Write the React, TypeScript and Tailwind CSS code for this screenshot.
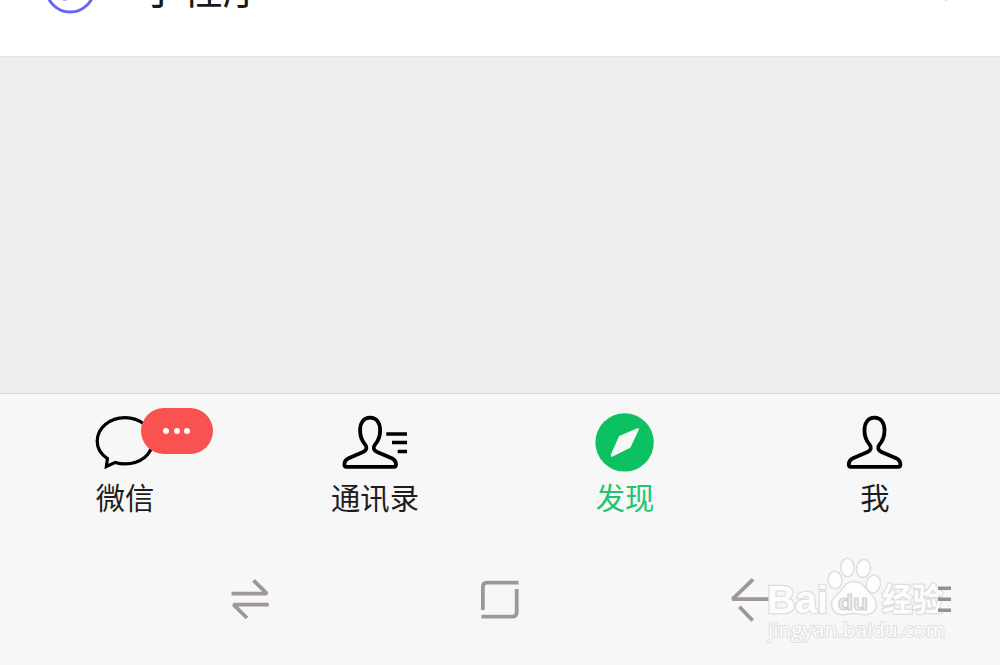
import React from 'react';

const PERSON =
  'M874.5 417.700C867.5 417.700 864.500 423.5 864.500 430.5C864.500 437 866 440.5 869.5 444.5C872 447.5 871 450.5 867.5 452L853 458.3C849.5 460 848.800 461.5 848.800 464.5Q848.800 466.8 851 466.8H898.2Q900.400 466.8 900.400 464.5C900.400 461.5 899.7 460 896.2 458.3L881.5 452C878 450.5 877 447.5 879.5 444.5C883 440.5 884.5 437 884.5 430.5C884.5 423.5 881.5 417.700 874.5 417.700Z';

const ChatIcon = () => (
  <svg width="70" height="64" viewBox="90 410 70 64" fill="none" stroke="#000" strokeWidth="3.2">
    <path d="M125 417.7C109.500 417.700 97.200 428.200 97.200 441.300C97.200 448.200 101.300 454.500 107.400 458.600L106.400 466.500L115.300 462.400Q120 463.900 125 463.900C140.400 463.900 152.500 454.400 152.500 441.300C152.500 428.200 140.400 417.700 125 417.700Z" />
  </svg>
);

const ContactsIcon = () => (
  <svg width="70" height="64" viewBox="340 410 70 64" fill="none" stroke="#000" strokeWidth="3.8">
    <path d={PERSON} transform="translate(-504.400 0)" />
    <path d="M386.300 433.900H407M392 442.600H407M397.700 451.400H407" strokeWidth="3.5" />
  </svg>
);

const DiscoverIcon = () => (
  <svg width="70" height="64" viewBox="590 410 70 64">
    <circle cx="624.600" cy="442.400" r="29.200" fill="#0bc161" />
    <path
      d="M619.100 436L637.300 428.300Q639.400 427.800 638.700 430L630.300 447.800L612.200 456.700Q610.300 457 610.800 454.700Z"
      fill="#f7f7f7"
    />
  </svg>
);

const MeIcon = () => (
  <svg width="70" height="64" viewBox="840 410 70 64" fill="none" stroke="#000" strokeWidth="3.8">
    <path d={PERSON} />
  </svg>
);

const tabs = [
  { label: '微信', icon: <ChatIcon />, badge: true },
  { label: '通讯录', icon: <ContactsIcon /> },
  { label: '发现', icon: <DiscoverIcon />, active: true },
  { label: '我', icon: <MeIcon /> },
];

const Watermark = () => (
  <svg
    className="absolute left-[760px] top-[550px]"
    width="200"
    height="100"
    viewBox="760 550 200 100"
    fill="#fdfdfd"
    stroke="#dedede"
    strokeWidth="1.500"
  >
    <g strokeWidth="2.600" paintOrder="stroke" strokeLinejoin="round">
      <text x="767" y="613" fontSize="39" fontWeight="700" textLength="61" lengthAdjust="spacingAndGlyphs" className="font-['Liberation_Sans']">Bai</text>
      <text x="882" y="611" fontSize="32" fontWeight="700" textLength="61" lengthAdjust="spacingAndGlyphs" className="font-['Noto_Sans_CJK_SC']">经验</text>
      <text x="768" y="637" fontSize="20" strokeWidth="2" textLength="177" lengthAdjust="spacingAndGlyphs" className="font-['Open_Sans']">jingyan.baidu.com</text>
    </g>
    <ellipse cx="835" cy="580" rx="7" ry="8.800" transform="rotate(-8 835 580)" />
    <ellipse cx="847.500" cy="567.500" rx="6.700" ry="9.200" />
    <ellipse cx="863.500" cy="568.500" rx="7" ry="9" transform="rotate(8 863.500 568.500)" />
    <ellipse cx="873.400" cy="584" rx="7" ry="9" transform="rotate(12 873.400 584)" />
    <path d="M854 581.500C844 581.500 843 590 838 594C833 598 831 601 831.500 605C832.500 613 838 615.500 845 614.500Q854 612.500 862 614.500C870 615.500 876 613 876.500 605C877 600 873 596 869 592C864 587 863 581.500 854 581.500Z" />
    <text x="838" y="610" fontSize="22" fontWeight="700" fill="#eee" stroke="#cfcfcf" strokeWidth="1.200" textLength="30" lengthAdjust="spacingAndGlyphs" className="font-['Liberation_Sans']">du</text>
  </svg>
);

export default function App() {
  return (
    <div className="relative flex h-[665px] w-[1000px] flex-col overflow-hidden bg-[#ededed] font-['Noto_Sans_CJK_SC',sans-serif]">
      <div className="relative h-[57px] shrink-0 overflow-hidden border-b border-[#e6e6e6] bg-white">
        <svg className="absolute left-0 top-0" width="1000" height="20" fill="none">
          <circle cx="70.200" cy="-12" r="24" stroke="#6467f0" strokeWidth="3" />
          <path d="M59 -5Q63 1 68 -2" stroke="#6467f0" strokeWidth="3" />
          <path d="M939 -7L946 0L949 -3" stroke="#ddd" strokeWidth="2.500" />
        </svg>
        <span className="absolute left-[140.500px] top-[-38px] whitespace-nowrap text-[41px] leading-[48px] text-[#191919]">小程序</span>
      </div>

      <div className="h-[335.500px] shrink-0" />

      <div className="flex h-[143.500px] shrink-0 border-t border-[#d8d8d8] bg-[#f7f7f7]">
        {tabs.map((tab) => (
          <div key={tab.label} className="relative flex flex-1 flex-col items-center pt-4">
            {tab.icon}
            {tab.badge && (
              <div className="absolute left-[140.500px] top-[14px] flex h-[46px] w-[72.500px] items-center justify-center gap-[4.700px] rounded-full bg-[#fa5151]">
                <i className="size-[6px] rounded-full bg-white" />
                <i className="size-[6px] rounded-full bg-white" />
                <i className="size-[6px] rounded-full bg-white" />
              </div>
            )}
            <span className={`mt-0.5 text-[29.300px] leading-[40px] ${tab.active ? 'text-[#1ec46e]' : 'text-[#1d1d1d]'}`}>
              {tab.label}
            </span>
          </div>
        ))}
      </div>

      <div className="flex flex-1 justify-center bg-[#f7f7f7]">
        <svg width="1000" height="129" viewBox="0 536 1000 129" fill="none" stroke="#9f9795" strokeWidth="3.800" strokeLinejoin="bevel">
          <path d="M231.500 593.700H267L253.500 580.300M268.700 604.700H233.500L247 618" />
          <path d="M518.500 582.700H487Q482.900 582.700 482.900 587V610M481.500 616.700H512Q516.700 616.700 516.700 612V589" />
          <path d="M770 599.200H732.500L753 579.300M739.300 606.700L752.700 620.500" />
        </svg>
      </div>
      <Watermark />
      <svg className="absolute left-[938px] top-[584px]" width="14" height="32" viewBox="938 584 14 32" stroke="#919191" strokeWidth="3.600">
        <path d="M938 588.200H951M938 599.200H951M938 610.300H951" />
      </svg>
    </div>
  );
}
